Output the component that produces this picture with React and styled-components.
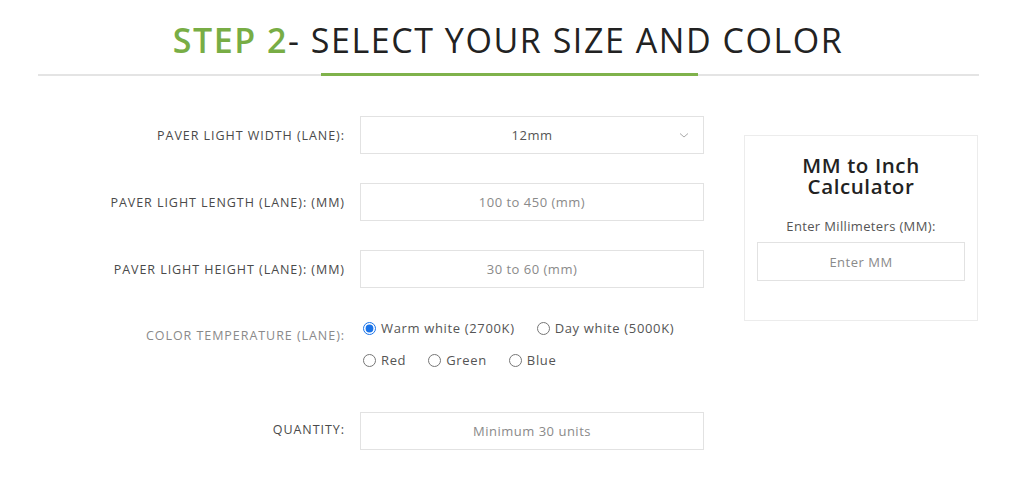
import React from "react";
import styled, { createGlobalStyle } from "styled-components";

const GlobalStyle = createGlobalStyle`
  body {
    margin: 0;
    background: #fff;
    font-family: "Open Sans", "Noto Sans", sans-serif;
    color: #444;
  }
`;

const Page = styled.div`
  width: 1024px;
  padding-top: 18px;
`;

const Title = styled.h2`
  margin: 0 0 0 -8px;
  text-align: center;
  font-size: 34px;
  font-weight: 400;
  line-height: 44px;
  color: #222;
  letter-spacing: 1.55px;
`;

const Accent = styled.span`
  color: #78ad45;
  font-weight: 600;
`;

const Divider = styled.div`
  margin: 12px 45px 0 38px;
  display: flex;
  justify-content: center;
  border-bottom: 2px solid #e4e4e4;
  height: 0;
  padding-left: 2px;
`;

const GreenBar = styled.div`
  width: 377px;
  height: 3px;
  margin-top: -1px;
  background: #7fb24b;
`;

const Content = styled.div`
  display: flex;
  margin: 40px 0 0 38px;
`;

const Form = styled.div`
  width: 666px;
  display: flex;
  flex-direction: column;
`;

const Row = styled.div`
  display: grid;
  grid-template-columns: 307px 344px;
  column-gap: 15px;
  align-items: ${(p) => (p.$top ? "start" : "center")};
  margin-bottom: ${(p) => p.$gap || 29}px;
`;

const Label = styled.label`
  text-align: right;
  font-size: 12.5px;
  letter-spacing: 0.95px;
  color: ${(p) => (p.$light ? "#8a8a8a" : "#4a4a4a")};
  padding-top: ${(p) => p.$offset || 0}px;
  margin-top: ${(p) => p.$shift || 0}px;
`;

const Field = styled.div`
  height: 38px;
  box-sizing: border-box;
  border: 1px solid #e2e2e2;
  display: flex;
  align-items: center;
  justify-content: center;
  position: relative;
  font-size: 13px;
  letter-spacing: 0.5px;
  color: ${(p) => (p.$value ? "#555" : "#8a8a8a")};
`;

const Chevron = styled.svg`
  position: absolute;
  right: 14px;
  top: 15px;
`;

const RadioGroup = styled.div`
  display: flex;
  flex-direction: column;
  gap: 12px;
`;

const RadioLine = styled.div`
  display: flex;
  gap: 19px;
  height: 20px;
  align-items: center;
`;

const Option = styled.label`
  display: flex;
  align-items: center;
  gap: 5px;
  font-size: 13px;
  letter-spacing: 0.65px;
  color: #555;

  input {
    margin: 0 0 0 3px;
    width: 13px;
    height: 13px;
    accent-color: #1a73e8;
  }
`;

const Calc = styled.div`
  width: 234px;
  height: 186px;
  box-sizing: border-box;
  margin: 19px 0 0 40px;
  border: 1px solid #ececec;
  padding: 19px 12px 0;
  text-align: center;
`;

const CalcTitle = styled.h3`
  margin: 0;
  font-size: 20.5px;
  line-height: 21px;
  font-weight: 600;
  letter-spacing: 0.6px;
  color: #222;
`;

const CalcLabel = styled.div`
  margin-top: 20px;
  font-size: 13px;
  letter-spacing: 0.35px;
  color: #555;
`;

const CalcInput = styled.div`
  margin-top: 7px;
  height: 39px;
  box-sizing: border-box;
  border: 1px solid #e2e2e2;
  display: flex;
  align-items: center;
  justify-content: center;
  font-size: 13px;
  letter-spacing: 0.5px;
  color: #8a8a8a;
`;

export default function App() {
  return (
    <Page>
      <GlobalStyle />
      <Title>
        <Accent>STEP 2</Accent>- SELECT YOUR SIZE AND COLOR
      </Title>
      <Divider>
        <GreenBar />
      </Divider>
      <Content>
        <Form>
          <Row>
            <Label>PAVER LIGHT WIDTH (LANE):</Label>
            <Field $value>
              12mm
              <Chevron width="10" height="7" viewBox="0 0 10 7">
                <path d="M1 1.5 L5 5 L9 1.5" fill="none" stroke="#aaa" strokeWidth="1" />
              </Chevron>
            </Field>
          </Row>
          <Row>
            <Label>PAVER LIGHT LENGTH (LANE): (MM)</Label>
            <Field>100 to 450 (mm)</Field>
          </Row>
          <Row $gap={30}>
            <Label>PAVER LIGHT HEIGHT (LANE): (MM)</Label>
            <Field>30 to 60 (mm)</Field>
          </Row>
          <Row $top $gap={42}>
            <Label $light $offset={9}>COLOR TEMPERATURE (LANE):</Label>
            <RadioGroup>
              <RadioLine>
                <Option>
                  <input type="radio" name="temp" defaultChecked /> Warm white (2700K)
                </Option>
                <Option>
                  <input type="radio" name="temp" /> Day white (5000K)
                </Option>
              </RadioLine>
              <RadioLine>
                <Option>
                  <input type="radio" name="temp" /> Red
                </Option>
                <Option>
                  <input type="radio" name="temp" /> Green
                </Option>
                <Option>
                  <input type="radio" name="temp" /> Blue
                </Option>
              </RadioLine>
            </RadioGroup>
          </Row>
          <Row>
            <Label $shift={-4}>QUANTITY:</Label>
            <Field>Minimum 30 units</Field>
          </Row>
        </Form>
        <Calc>
          <CalcTitle>
            MM to Inch
            <br />
            Calculator
          </CalcTitle>
          <CalcLabel>Enter Millimeters (MM):</CalcLabel>
          <CalcInput>Enter MM</CalcInput>
        </Calc>
      </Content>
    </Page>
  );
}
